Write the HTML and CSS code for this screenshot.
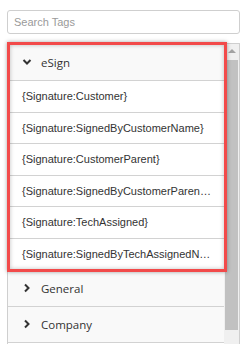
FILE: index.html
```html
<!DOCTYPE html>
<html>
<head>
<meta charset="utf-8">
<link rel="stylesheet" href="styles.css">
</head>
<body>
<div class="page">
  <input class="search" type="text" placeholder="Search Tags">
  <div class="panel">
    <div class="list">
      <div class="group">
        <div class="head">
          <svg class="chev" width="10" height="10" viewBox="0 0 10 10"><polyline points="1.5,3 5,6.5 8.5,3" fill="none" stroke="#333" stroke-width="2"/></svg>
          <span>eSign</span>
        </div>
        <div class="item">{Signature:Customer}</div>
        <div class="item">{Signature:SignedByCustomerName}</div>
        <div class="item">{Signature:CustomerParent}</div>
        <div class="item">{Signature:SignedByCustomerParentName}</div>
        <div class="item">{Signature:TechAssigned}</div>
        <div class="item">{Signature:SignedByTechAssignedName}</div>
      </div>
      <div class="head">
        <svg class="chev" width="10" height="10" viewBox="0 0 10 10"><polyline points="3,1.5 6.5,5 3,8.5" fill="none" stroke="#333" stroke-width="2"/></svg>
        <span>General</span>
      </div>
      <div class="head">
        <svg class="chev" width="10" height="10" viewBox="0 0 10 10"><polyline points="3,1.5 6.5,5 3,8.5" fill="none" stroke="#333" stroke-width="2"/></svg>
        <span>Company</span>
      </div>
    </div>
    <div class="scrollbar">
      <div class="arrow"></div>
      <div class="thumb"></div>
    </div>
  </div>
  <div class="highlight"></div>
</div>
</body>
</html>
```
FILE: styles.css
```css
html, body {
  margin: 0;
  padding: 0;
  background: #fff;
  overflow: hidden;
}
.page {
  position: relative;
  width: 248px;
  height: 344px;
  padding: 10px 8px 0 7px;
  box-sizing: border-box;
  display: flex;
  flex-direction: column;
  gap: 9px;
}
.search {
  height: 24px;
  box-sizing: border-box;
  width: 233px;
  border: 1px solid #cfcfcf;
  border-radius: 3px;
  padding: 0 6px;
  font-family: "Liberation Sans", Arial, sans-serif;
  font-size: 11px;
  color: #333;
  outline: none;
}
.search::placeholder {
  color: #9a9a9a;
}
.panel {
  display: flex;
  border: 1px solid #cfcfcf;
  border-bottom: none;
  width: 233px;
  box-sizing: border-box;
  flex: 1;
  overflow: hidden;
}
.list {
  flex: 1;
  min-width: 0;
  display: flex;
  flex-direction: column;
}
.group {
  display: flex;
  flex-direction: column;
}
.head {
  height: 36px;
  flex: none;
  box-sizing: border-box;
  border-bottom: 1px solid #d2d2d2;
  background: #f9f9f9;
  display: flex;
  align-items: center;
  padding-left: 14px;
  gap: 9px;
  font-family: "Open Sans", sans-serif;
  font-size: 11.5px;
  color: #333;
}
.group .head {
  height: 37px;
}
.chev {
  flex: none;
}
.item {
  height: 31.6px;
  flex: none;
  box-sizing: border-box;
  border-bottom: 1px solid #d2d2d2;
  background: #fff;
  padding-left: 14px;
  padding-right: 11px;
  font-family: "Liberation Sans", Arial, sans-serif;
  font-size: 11px;
  color: #333;
  white-space: nowrap;
  overflow: hidden;
  text-overflow: ellipsis;
  display: block;
  line-height: 30.6px;
}
.scrollbar {
  width: 15px;
  flex: none;
  background: #f0f0f0;
  display: flex;
  flex-direction: column;
  align-items: center;
}
.arrow {
  margin-top: 5px;
  width: 0;
  height: 0;
  border-left: 4px solid transparent;
  border-right: 4px solid transparent;
  border-bottom: 4px solid #a3a3a3;
}
.thumb {
  margin-top: 7px;
  width: 13px;
  height: 270px;
  background: #c1c1c1;
}
.highlight {
  position: absolute;
  left: 7px;
  top: 42px;
  width: 220px;
  height: 230px;
  box-sizing: border-box;
  border: 3px solid #f24a4a;
  box-shadow: 0 0 4px rgba(0,0,0,0.35), inset 0 0 4px rgba(0,0,0,0.25);
  pointer-events: none;
}
```
